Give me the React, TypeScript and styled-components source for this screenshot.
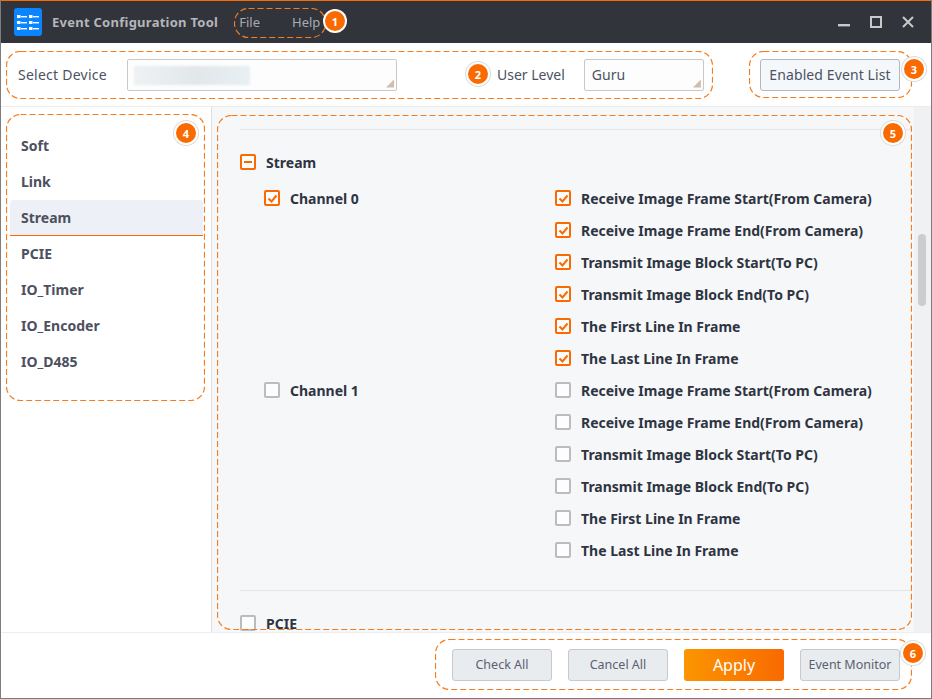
import React from "react";
import styled, { createGlobalStyle } from "styled-components";

const GlobalStyle = createGlobalStyle`
  html, body {
    margin: 0;
    padding: 0;
    background: #fff;
  }
  * {
    box-sizing: border-box;
  }
`;

type MarkBox = { left: number; top: number; width: number; height: number };
type Badge = { n: number; cx: number; cy: number };

const EVENTS = [
  "Receive Image Frame Start(From Camera)",
  "Receive Image Frame End(From Camera)",
  "Transmit Image Block Start(To PC)",
  "Transmit Image Block End(To PC)",
  "The First Line In Frame",
  "The Last Line In Frame",
];

const CATEGORIES = ["Soft", "Link", "Stream", "PCIE", "IO_Timer", "IO_Encoder", "IO_D485"];

const MARK_BOXES: MarkBox[] = [
  { left: 234, top: 8, width: 92, height: 30 },
  { left: 6, top: 51, width: 707, height: 48 },
  { left: 749, top: 51, width: 163, height: 47 },
  { left: 6, top: 114, width: 199, height: 287 },
  { left: 217, top: 115, width: 695, height: 515 },
  { left: 435, top: 639, width: 477, height: 51 },
];

const BADGES: Badge[] = [
  { n: 2, cx: 478, cy: 74 },
  { n: 3, cx: 914, cy: 69 },
  { n: 4, cx: 186, cy: 133 },
  { n: 5, cx: 893, cy: 133 },
  { n: 6, cx: 913, cy: 653 },
];

type CheckProps = { state?: "on" | "off" | "partial" };

const Check = ({ state = "off" }: CheckProps) => (
  <CheckBox $active={state !== "off"}>
    {state === "on" && (
      <svg width="11" height="11" viewBox="0 0 11 11">
        <path d="M1.5 5.5 L4.5 8.5 L9.5 2.5" fill="none" stroke="#f96a00" strokeWidth="2" />
      </svg>
    )}
    {state === "partial" && <PartialBar />}
  </CheckBox>
);

const ListIcon = () => (
  <svg width="28" height="28" viewBox="0 0 28 28">
    <rect width="28" height="28" rx="3" fill="#0a84ff" />
    <g fill="#fff">
      <rect x="3" y="7" width="3.5" height="3" />
      <rect x="7" y="8" width="6" height="1.4" />
      <rect x="15" y="7" width="3.5" height="3" />
      <rect x="19" y="8" width="6" height="1.4" />
      <rect x="3" y="13" width="3.5" height="3" />
      <rect x="7" y="14" width="6" height="1.4" />
      <rect x="15" y="13" width="3.5" height="3" />
      <rect x="19" y="14" width="6" height="1.4" />
      <rect x="3" y="19" width="3.5" height="3" />
      <rect x="7" y="20" width="6" height="1.4" />
      <rect x="15" y="19" width="3.5" height="3" />
      <rect x="19" y="20" width="6" height="1.4" />
    </g>
  </svg>
);

const ChannelGroup = ({ name, checked }: { name: string; checked: boolean }) => (
  <Group>
    <ChannelCol>
      <Row>
        <Check state={checked ? "on" : "off"} />
        <BoldLabel>{name}</BoldLabel>
      </Row>
    </ChannelCol>
    <div>
      {EVENTS.map((ev) => (
        <Row key={ev}>
          <Check state={checked ? "on" : "off"} />
          <BoldLabel>{ev}</BoldLabel>
        </Row>
      ))}
    </div>
  </Group>
);

export default function App() {
  return (
    <Window>
      <GlobalStyle />
      <TitleBar>
        <ListIcon />
        <AppTitle>Event Configuration Tool</AppTitle>
        <Menu>
          <MenuItem>File</MenuItem>
          <MenuItem>Help</MenuItem>
        </Menu>
        <WinControls>
          <svg width="12" height="12" viewBox="0 0 12 12">
            <rect x="0" y="8" width="12" height="2.4" fill="#c9c9c9" />
          </svg>
          <svg width="12" height="12" viewBox="0 0 12 12">
            <rect x="1" y="1" width="10" height="10" fill="none" stroke="#c9c9c9" strokeWidth="2" />
          </svg>
          <svg width="12" height="12" viewBox="0 0 12 12">
            <path d="M1 1 L11 11 M11 1 L1 11" stroke="#c9c9c9" strokeWidth="2" />
          </svg>
        </WinControls>
      </TitleBar>

      <Toolbar>
        <FieldLabel>Select Device</FieldLabel>
        <DeviceCombo>
          <BlurredValue />
        </DeviceCombo>
        <UserLevelLabel>User Level</UserLevelLabel>
        <LevelCombo>Guru</LevelCombo>
        <ListButton>Enabled Event List</ListButton>
      </Toolbar>

      <Body>
        <Sidebar>
          {CATEGORIES.map((c) => (
            <NavItem key={c} $selected={c === "Stream"}>
              {c}
            </NavItem>
          ))}
        </Sidebar>
        <Panel>
          <Content>
            <Rule />
            <SectionRow>
              <Check state="partial" />
              <BoldLabel>Stream</BoldLabel>
            </SectionRow>
            <Channels>
              <ChannelGroup name="Channel 0" checked />
              <ChannelGroup name="Channel 1" checked={false} />
            </Channels>
            <LowerRule />
            <SectionRow>
              <Check />
              <BoldLabel>PCIE</BoldLabel>
            </SectionRow>
          </Content>
          <ScrollTrack>
            <ScrollThumb />
          </ScrollTrack>
        </Panel>
      </Body>

      <Footer>
        <GrayButton>Check All</GrayButton>
        <GrayButton>Cancel All</GrayButton>
        <ApplyButton>Apply</ApplyButton>
        <GrayButton>Event Monitor</GrayButton>
      </Footer>

      {MARK_BOXES.map((b) => (
        <DashedMark key={b.left + "-" + b.top} $box={b}>
          <rect
            x="0.5"
            y="0.5"
            width={b.width - 1}
            height={b.height - 1}
            rx="14"
            fill="none"
            stroke="#f57c1f"
            strokeWidth="1.2"
            strokeDasharray="6 3"
          />
        </DashedMark>
      ))}
      <FirstBadge>1</FirstBadge>
      {BADGES.map((b) => (
        <RingBadge key={b.n} $cx={b.cx} $cy={b.cy}>
          {b.n}
        </RingBadge>
      ))}
    </Window>
  );
}

const Window = styled.div`
  position: relative;
  width: 932px;
  height: 699px;
  display: flex;
  flex-direction: column;
  overflow: hidden;
  background: #fff;
  border-left: 1px solid #7d7d7d;
  border-right: 1px solid #7d7d7d;
  border-bottom: 1px solid #7d7d7d;
  font-family: "Noto Sans", "Open Sans", sans-serif;
`;

const TitleBar = styled.div`
  flex: none;
  height: 43px;
  display: flex;
  align-items: center;
  padding: 0 17px 0 13px;
  background: #32343c;
  border-top: 1px solid #f96a00;
`;

const AppTitle = styled.div`
  margin-left: 10px;
  font-size: 13px;
  font-weight: 700;
  letter-spacing: 0.26px;
  color: #b4b6ba;
`;

const Menu = styled.div`
  display: flex;
  gap: 32px;
  margin-left: 21px;
`;

const MenuItem = styled.div`
  font-size: 13px;
  color: #a8aab0;
`;

const WinControls = styled.div`
  display: flex;
  gap: 20px;
  margin-left: auto;
`;

const Toolbar = styled.div`
  flex: none;
  height: 64px;
  display: flex;
  align-items: center;
  padding: 0 31px 0 17px;
  border-bottom: 1px solid #ececec;
`;

const FieldLabel = styled.div`
  width: 109px;
  font-size: 14px;
  letter-spacing: 0.25px;
  color: #4c5262;
`;

const Combo = styled.div`
  position: relative;
  height: 32px;
  border: 1px solid #c9c9c9;
  border-radius: 2px;
  background: #fdfdfd;
  &::after {
    content: "";
    position: absolute;
    right: 2px;
    bottom: 2px;
    width: 8px;
    height: 8px;
    background: #d3bcab;
    clip-path: polygon(100% 0, 100% 100%, 0 100%);
  }
`;

const DeviceCombo = styled(Combo)`
  width: 270px;
  padding: 6px;
`;

const BlurredValue = styled.div`
  width: 116px;
  height: 19px;
  background: linear-gradient(90deg, #eef2f5, #e2e7ea 55%, #e8f0f4);
  filter: blur(1px);
`;

const UserLevelLabel = styled(FieldLabel)`
  width: auto;
  margin-left: 100px;
  letter-spacing: 0;
`;

const LevelCombo = styled(Combo)`
  width: 120px;
  margin-left: 19px;
  padding-left: 7px;
  line-height: 30px;
  font-size: 14px;
  color: #4c5262;
`;

const ListButton = styled.div`
  width: 140px;
  height: 32px;
  margin-left: auto;
  border: 1px solid #b3b7c0;
  border-radius: 3px;
  background: #f5f8fb;
  font-size: 14px;
  letter-spacing: 0.1px;
  line-height: 30px;
  text-align: center;
  color: #4c5262;
`;

const Body = styled.div`
  flex: 1;
  min-height: 0;
  display: flex;
`;

const Sidebar = styled.div`
  flex: none;
  width: 211px;
  padding: 21px 8px 0 9px;
  border-right: 1px solid #dedede;
`;

const NavItem = styled.div<{ $selected: boolean }>`
  height: 36px;
  padding-left: 11px;
  border-radius: 3px 3px 0 0;
  font-size: 14px;
  font-weight: 700;
  line-height: 36px;
  color: #4c5060;
  background: ${(p) => (p.$selected ? "#edf0f7" : "transparent")};
  border-bottom: 1px solid ${(p) => (p.$selected ? "#f96a00" : "transparent")};
`;

const Panel = styled.div`
  flex: 1;
  min-width: 0;
  display: flex;
  overflow: hidden;
  background: #f6f7f9;
`;

const Content = styled.div`
  flex: 1;
  min-width: 0;
  padding: 22px 3px 0 28px;
`;

const Rule = styled.div`
  height: 1px;
  background: #e4e5e8;
`;

const LowerRule = styled(Rule)`
  margin-top: 24px;
`;

const Row = styled.div`
  height: 32px;
  display: flex;
  align-items: center;
  gap: 10px;
`;

const SectionRow = styled(Row)`
  margin-top: 16px;
`;

const Channels = styled.div`
  margin-top: 4px;
`;

const Group = styled.div`
  display: flex;
`;

const ChannelCol = styled.div`
  flex: none;
  width: 315px;
  padding-left: 24px;
`;

const BoldLabel = styled.span`
  font-size: 14px;
  font-weight: 700;
  color: #2f3442;
  white-space: nowrap;
`;

const CheckBox = styled.span<{ $active: boolean }>`
  flex: none;
  width: 16px;
  height: 16px;
  display: flex;
  align-items: center;
  justify-content: center;
  border: 2px solid ${(p) => (p.$active ? "#f96a00" : "#bcbcbc")};
  border-radius: 2px;
  background: #fdfdfd;
`;

const PartialBar = styled.span`
  width: 8px;
  height: 2px;
  background: #f96a00;
`;

const ScrollTrack = styled.div`
  flex: none;
  width: 17px;
  padding: 127px 4px 0;
  background: #eff1f3;
`;

const ScrollThumb = styled.div`
  width: 8px;
  height: 72px;
  border-radius: 4px;
  background: #cdcccf;
`;

const Footer = styled.div`
  flex: none;
  height: 66px;
  display: flex;
  align-items: center;
  justify-content: flex-end;
  gap: 16px;
  padding: 0 31px 1px 0;
  border-top: 1px solid #eeeeee;
`;

const GrayButton = styled.div`
  width: 100px;
  height: 32px;
  border: 1px solid #c6c9d0;
  border-radius: 3px;
  background: #e9ecef;
  font-size: 12.5px;
  line-height: 30px;
  text-align: center;
  color: #5a6070;
`;

const ApplyButton = styled(GrayButton)`
  border: none;
  background: linear-gradient(90deg, #fb9500, #f96a00);
  font-size: 16px;
  line-height: 32px;
  color: #fff;
`;

const DashedMark = styled.svg.attrs<{ $box: MarkBox }>((p) => ({
  width: p.$box.width,
  height: p.$box.height,
}))<{ $box: MarkBox }>`
  position: absolute;
  left: ${(p) => p.$box.left - 1}px;
  top: ${(p) => p.$box.top}px;
  pointer-events: none;
`;

const RingBadge = styled.div<{ $cx: number; $cy: number }>`
  position: absolute;
  left: ${(p) => p.$cx - 10 - 1}px;
  top: ${(p) => p.$cy - 10}px;
  width: 20px;
  height: 20px;
  display: flex;
  align-items: center;
  justify-content: center;
  border-radius: 50%;
  background: #f96a00;
  box-shadow: 0 0 0 2px #fff, 0 0 0 3px #dcdcdc;
  font-size: 11px;
  font-weight: 700;
  color: #fff;
`;

const FirstBadge = styled(RingBadge).attrs({ $cx: 335, $cy: 21 })`
  box-shadow: 0 0 0 2px #fff;
`;
